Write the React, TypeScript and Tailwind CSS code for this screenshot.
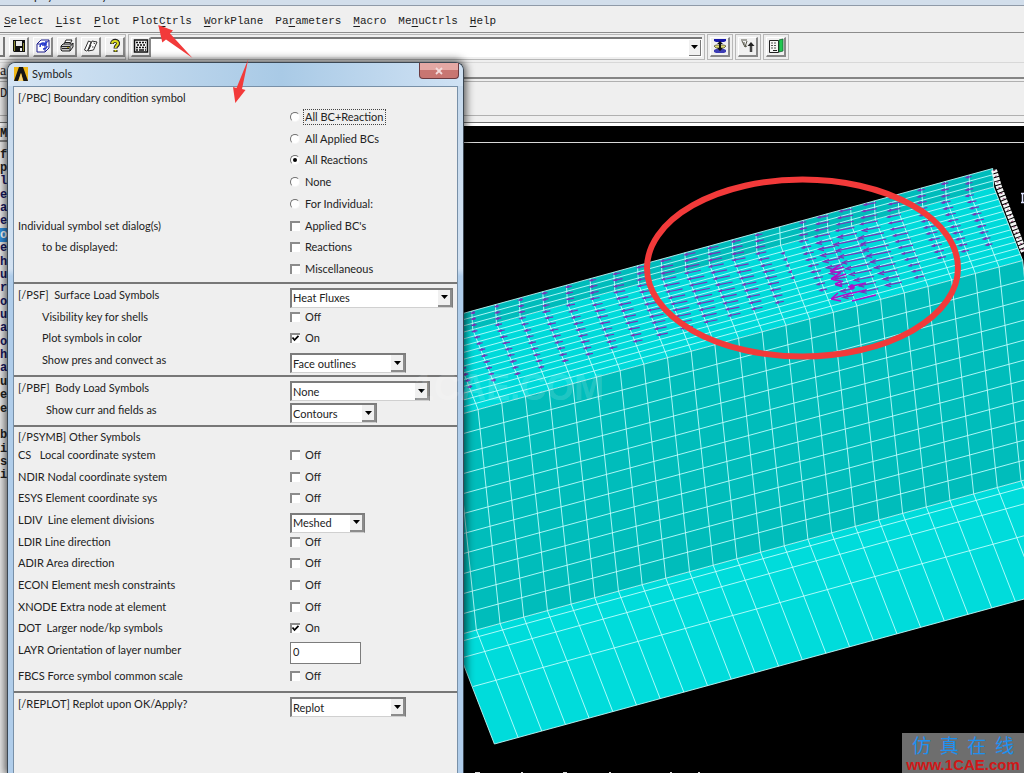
import React, { useId } from "react";

/* ---------- Mesh view ---------- */

type Pt = [number, number];

const COLS = 25;
const top = (k: number): Pt => [992.7 - 23.68 * k, 168.5 + 6.48 * k];
const at = (k: number, o: Pt): Pt => [top(k)[0] + o[0], top(k)[1] + o[1]];

const lerp = (a: Pt, b: Pt, n: number): Pt[] =>
  Array.from({ length: n + 1 }, (_, i) => [
    a[0] + ((b[0] - a[0]) * i) / n,
    a[1] + ((b[1] - a[1]) * i) / n,
  ]);

const TOP: Pt = [0, 0];
const BEND: Pt = [1, 18.5];
const EDGE: Pt = [30, 92];
const FOOT: Pt = [52, 306];
const BASE: Pt = [93.7, 413.5];

const upperRows = lerp(TOP, BEND, 3);
const slopeRows = lerp(BEND, EDGE, 12);
const frontRows = lerp(EDGE, FOOT, 11);
const baseRows: Pt[] = [[54.3, 312.5], [60.3, 327.5], [72.5, 356], BASE];
const rows = [...upperRows, ...slopeRows.slice(1), ...frontRows.slice(1), ...baseRows];
const arrowRows = [...upperRows, ...slopeRows.slice(1)];

const band = (a: Pt, b: Pt) =>
  [at(0, a), at(COLS, a), at(COLS, b), at(0, b)].map((p) => p.join(",")).join(" ");

const columnLine = (k: number) =>
  [TOP, BEND, EDGE, FOOT, BASE].map((o) => at(k, o).join(",")).join(" ");

/* Reaction vector length for each mesh column, right to left */
const REACH = [0, 8, 9, 10, 14, 18, 19, 16, 9, 2, 10, 13, 15, 16, 15, 13, 11, 9, 8, 7, 6, 6, 5, 5, 4, 4];

function Vectors() {
  const out: React.ReactNode[] = [];
  for (let k = 1; k <= COLS; k++) {
    const last = k >= 4 && k <= 7 ? 13 : 11;
    for (let i = 0; i <= last; i++) {
      const [x, y] = at(k, arrowRows[i]);
      const swell = 0.55 + 0.5 * Math.sin((Math.PI * Math.min(i + 1, 13)) / 14);
      const peak = (k === 5 || k === 6) && i > 4 ? 1.35 : 1;
      const len = REACH[k] * swell * peak;
      if (len < 2) continue;
      const x0 = k > 9 ? x : x - len * (k >= 4 && k <= 7 ? 0.85 : 0.5);
      const x1 = x0 + len;
      const y0 = y - (x0 - x) * 0.2 + 2;
      const y1 = y - (x1 - x) * 0.2 + 2;
      const h = k >= 5 && k <= 7 && i > 3 ? 1.8 : 0.9;
      out.push(
        <g key={`${k}-${i}`}>
          <path d={`M${x0} ${y0}L${x1} ${y1}`} />
          <path d={`M${x0 + h * 3} ${y0 - h - 0.6}L${x0} ${y0}L${x0 + h * 3} ${y0 + h - 0.6}`} />
        </g>
      );
    }
  }
  return (
    <g stroke="#7a34b8" strokeWidth="1.2" fill="none">
      {out}
      <g stroke="#b010c8" strokeWidth="1.6">
        <path d="M831 299L851 293M831 299L838 293M831 299L841 301" />
        <path d="M831 279L846 274M831 279L840 273M831 279L841 281" />
        <path d="M830 271L844 267M830 271L840 265M830 271L841 273" />
        <path d="M835 284L843 281M835 284L842 286M848 287L866 283M848 294L866 290M852 301L876 295" />
        <circle cx="852" cy="287" r="2" fill="#b010c8" />
      </g>
    </g>
  );
}

function MeshView() {
  return (
    <svg
      className="block h-full min-w-0 flex-1 bg-black"
      viewBox="12 126 1012 647"
      preserveAspectRatio="xMinYMin slice"
      role="img"
      aria-label="Finite element mesh with reaction vectors"
    >
      <path d="M12 142.5H1024" stroke="#d8d8d8" />
      <polygon points={band(TOP, BEND)} fill="#00bcbb" />
      <polygon points={band(BEND, EDGE)} fill="#00dada" />
      <polygon points={band(EDGE, FOOT)} fill="#00bdbb" />
      <polygon points={band(FOOT, BASE)} fill="#00dcdb" />
      <g stroke="#c8ffff" strokeOpacity="0.85" fill="none">
        {rows.map((o, i) => (
          <path key={i} d={`M${at(0, o).join(" ")}L${at(COLS, o).join(" ")}`} />
        ))}
        {Array.from({ length: COLS + 1 }, (_, k) => (
          <polyline key={k} points={columnLine(k)} />
        ))}
      </g>
      <Vectors />
      <polyline points="994,170 999,187 1024,252" stroke="#f4f4f4" strokeWidth="6" strokeDasharray="3 1" fill="none" />
      <polyline points="994,170 999,187 1024,252" stroke="#8a3a6a" strokeWidth="2" strokeDasharray="1 5" fill="none" />
      <ellipse cx="802.5" cy="268" rx="155.5" ry="88.5" stroke="#f23a3a" strokeWidth="6" fill="none" />
      <path d="M1021 193.500H1024M1022.500 193V203M1021 202.500H1024" stroke="#dfe3ff" strokeWidth="1.500" />
      <path d="M475 772.500h5M521 772.500h2M563 772.500h4M609 772.500h2M670 772.500h2M698 772.500h2" stroke="#ddd" />
    </svg>
  );
}

/* ---------- Toolbar ---------- */

function SaveIcon() {
  return (
    <svg viewBox="0 0 16 16" className="size-4" aria-hidden="true">
      <path d="M2 2h12v12H3l-1-1z" fill="#111" />
      <path d="M5 3h6v5H5z" fill="#e8e8e8" />
      <path d="M3 3h1v10H3zM12 5h1v8h-1z" fill="#8a8a30" />
      <path d="M9 10h2v3H9z" fill="#eee" />
    </svg>
  );
}
function ViewIcon() {
  return (
    <svg viewBox="0 0 16 16" className="size-4" fill="none" aria-hidden="true">
      <path d="M2 6L6 2H14V10L10 14H2Z" fill="#fff" stroke="#1c1c8c" />
      <path d="M2.500 6H10V13.500M10 6L14 2.500" stroke="#1c1c8c" />
      <path d="M5 9C5 5 8 4 11 6M11 3V7H7M8 11C11 11 12 9 12 8" stroke="#2238d0" strokeWidth="1.500" />
    </svg>
  );
}
function PrintIcon() {
  return (
    <svg viewBox="0 0 16 16" className="size-4" fill="none" stroke="#222" aria-hidden="true">
      <path d="M5 6L7 2H13L11 6" fill="#fff" />
      <path d="M2 8L4 6H13L14 5V9L11 13H3L2 12Z" fill="#c8c8c8" />
      <path d="M2 8.500H11L14 5.500M11 8.500V13M3 10.500H10M6 4.500H11" />
      <path d="M8 9.500H10" stroke="#b0a020" />
    </svg>
  );
}
function ReportIcon() {
  return (
    <svg viewBox="0 0 16 16" className="size-4" fill="#fff" stroke="#333" aria-hidden="true">
      <path d="M5.500 3L8 4L5 12L3.500 13L1.500 12Z" />
      <path d="M9 3L14 4L10.500 12L5 13Z" />
      <path d="M10.500 5L12 5.500M9 9L10.500 9M8 7L6 11" fill="none" />
    </svg>
  );
}
function HelpIcon() {
  return (
    <svg viewBox="0 0 16 16" className="size-4" fill="none" aria-hidden="true">
      <path d="M5 6C5 1.500 12 2 11 6C10.500 8 8.500 7.500 8.500 10.500M8.500 12V14" stroke="#222" strokeWidth="4" />
      <path d="M5 5.500C5.500 2 11 2.500 11 5.500C10.500 8 8.500 7.500 8.500 10M8.500 12V13.500" stroke="#dede20" strokeWidth="2" />
    </svg>
  );
}
function KeyboardIcon() {
  return (
    <svg viewBox="0 0 16 16" className="size-4" fill="none" stroke="#111" aria-hidden="true">
      <rect x="1.500" y="2" width="13" height="12" fill="#f4f4f4" strokeWidth="1.500" />
      <path d="M3 4.500H13" strokeDasharray="2 1" strokeWidth="1.500" />
      <path d="M4 7H13" strokeDasharray="2 1" strokeWidth="1.500" />
      <path d="M3 9.500H13" strokeDasharray="2 1" strokeWidth="1.500" />
      <path d="M3 12H5M6 12H11M12 12H13" strokeWidth="1.500" />
    </svg>
  );
}
function RaiseIcon() {
  return (
    <svg viewBox="0 0 16 16" className="size-4" aria-hidden="true">
      <path d="M2 3V1h12v2l-2 1H4z" fill="#1616a8" />
      <path d="M2 8l2-1h8l2 1-2 2H4z" fill="#e0dc70" stroke="#222" strokeWidth="0.600" />
      <path d="M2 12l2-1h8l2 1v2l-2 1H4l-2-1z" fill="#3c3cb4" />
      <path d="M8 3l3 3H9v4h2l-3 3-3-3h2V6H5z" fill="#111" />
    </svg>
  );
}
function ResetPickIcon() {
  return (
    <svg viewBox="0 0 16 16" className="size-4" fill="none" aria-hidden="true">
      <path d="M1 2H7M2 3L5 9L7 3M4 4V7M5 9L7 8" stroke="#555548" />
      <path d="M11 7V14" stroke="#444" strokeWidth="2.500" />
      <path d="M7.500 8L11 4L14.500 8Z" fill="#222" />
    </svg>
  );
}
function ContactIcon() {
  return (
    <svg viewBox="0 0 16 16" className="size-4" aria-hidden="true">
      <path d="M1.500 2.500h9v12h-9z" fill="#f6f6f6" stroke="#222" />
      <path d="M3 5h6M3 7.500h6M3 10h6" stroke="#555" strokeDasharray="2 1" />
      <path d="M5 12.500h4" stroke="#222" />
      <path d="M11 2l4-1v12l-4 1z" fill="#20c850" stroke="#146030" strokeWidth="0.800" />
    </svg>
  );
}

const TOOLS: [string, () => React.JSX.Element][] = [
  ["Save", SaveIcon],
  ["Pan, zoom, rotate", ViewIcon],
  ["Print", PrintIcon],
  ["Report generator", ReportIcon],
  ["Help", HelpIcon],
];
const SIDE_TOOLS: [string, () => React.JSX.Element][] = [
  ["Raise hidden", RaiseIcon],
  ["Reset picking", ResetPickIcon],
  ["Contact manager", ContactIcon],
];

function ToolButton({ label, Icon }: { label: string; Icon: () => React.JSX.Element }) {
  return (
    <button
      type="button"
      aria-label={label}
      className="flex size-5 shrink-0 items-center justify-center border-r-2 border-b-2 border-t border-l border-t-white border-l-white border-r-[#888] border-b-[#888] bg-[#f0f0f0]"
    >
      <Icon />
    </button>
  );
}

const MENU: [string, string, string][] = [
  ["", "S", "elect"],
  ["", "L", "ist"],
  ["", "P", "lot"],
  ["Plot", "C", "trls"],
  ["", "W", "orkPlane"],
  ["Pa", "r", "ameters"],
  ["", "M", "acro"],
  ["Me", "n", "uCtrls"],
  ["", "H", "elp"],
];

function Chrome() {
  return (
    <header className="flex flex-col bg-[#efefef]">
      <div className="h-1.5 overflow-hidden border-b border-[#8f9aa8] bg-[#d2deeb] pl-1.5 text-xs leading-3">
        <div className="-mt-[10px]">Multiphysics Utility Menu</div>
      </div>
      <nav className="flex h-[27px] items-center gap-3 border-b border-[#8c8c8c] pt-1 pl-1 font-['Liberation_Mono',monospace] text-[11px] text-[#1c1c1c]">
        {MENU.map(([a, u, b]) => (
          <button type="button" key={a + u + b} className="whitespace-pre">
            {a}
            <span className="underline underline-offset-2">{u}</span>
            {b}
          </button>
        ))}
      </nav>
      <div className="flex h-[30px] items-center gap-0.5 border-b border-[#d8d8d8] pb-0.5">
        <div className="flex h-[26px] w-[126px] shrink-0 items-center gap-1 border-y border-r border-[#b8b8b8]">
          <span className="h-5 w-[5px] border-r-2 border-b-2 border-[#777]" />
          {TOOLS.map(([label, Icon]) => (
            <ToolButton key={label} label={label} Icon={Icon} />
          ))}
        </div>
        <div className="flex h-[26px] w-[577px] items-center border border-[#b8b8b8] pr-0.5 pl-0.5">
          <ToolButton label="Toggle command entry" Icon={KeyboardIcon} />
          <div className="flex h-5 min-w-0 flex-1 border-t-2 border-[#777] bg-white">
            <input aria-label="Command" className="min-w-0 flex-1 bg-transparent px-1 text-xs outline-none" />
            <button
              type="button"
              aria-label="Command history"
              className="m-px flex w-3 items-center justify-center border-r border-b border-[#777] bg-[#f0f0f0]"
            >
              <svg viewBox="0 0 7 4" className="w-[7px]" aria-hidden="true">
                <path d="M0 0H7L3.500 4Z" />
              </svg>
            </button>
          </div>
        </div>
        {SIDE_TOOLS.map(([label, Icon]) => (
          <div key={label} className="flex h-[26px] w-[26px] items-center justify-center border border-[#b8b8b8]">
            <ToolButton label={label} Icon={Icon} />
          </div>
        ))}
      </div>
      <div className="h-4 border-b-2 border-[#858585] font-['Liberation_Serif',serif] text-sm leading-4">a</div>
      <div className="mt-0.5 h-[35px] border-y border-[#b0b0b0] pt-1 font-['Liberation_Mono',monospace] text-xs">D</div>
      <div className="h-[10px] border-b-3 border-white bg-[#efefef] pt-1.5">
        <div className="h-px bg-[#707070]" />
      </div>
    </header>
  );
}

/* ---------- Tree strip behind the dialog ---------- */

const STRIP = [..."fpleaeoehurouaohauee", " ", ..."bisi"];

function TreeStrip() {
  return (
    <aside className="flex w-3 shrink-0 flex-col bg-[#ececec] font-['Liberation_Mono',monospace] text-xs font-bold">
      <div className="h-4 border-b-2 border-[#888] leading-4">M</div>
      <ul className="mt-1.5 flex h-[334px] w-2 flex-col leading-none">
        {STRIP.map((s, i) => (
          <li
            key={i}
            className={
              i === 6
                ? "flex flex-1 items-center bg-[#2f8fe0] text-white"
                : i > 1 && i < 17
                  ? "flex flex-1 items-center text-[#151560]"
                  : "flex flex-1 items-center text-[#222]"
            }
          >
            {s}
          </li>
        ))}
      </ul>
    </aside>
  );
}

/* ---------- Dialog ---------- */

function Radio({ label, checked, boxed }: { label: string; checked?: boolean; boxed?: boolean }) {
  return (
    <label className="flex items-center gap-1">
      <span className="relative size-[10px]">
        <input
          type="radio"
          name="pbc"
          defaultChecked={checked}
          className="peer block size-[10px] appearance-none rounded-full border border-[#f6f6f6] border-t-[#707070] border-l-[#707070] bg-white"
        />
        <span className="pointer-events-none absolute top-[3px] left-[3px] hidden size-1 rounded-full bg-black peer-checked:block" />
      </span>
      <span className={boxed ? "-ml-px border border-dotted border-[#444] px-px leading-[14px]" : "px-px"}>{label}</span>
    </label>
  );
}

function Check({ label, checked, name }: { label: string; checked?: boolean; name?: string }) {
  return (
    <label className="flex items-center gap-[5px]">
      <span className="relative size-[10px]">
        <input
          type="checkbox"
          aria-label={name ? `${name} ${label}` : undefined}
          defaultChecked={checked}
          className="peer block size-[10px] appearance-none border-t-2 border-l-2 border-[#8c8c8c] bg-white"
        />
        <svg viewBox="0 0 10 10" className="pointer-events-none absolute inset-0 hidden size-[10px] peer-checked:block" aria-hidden="true">
          <path d="M2.500 4.500L4.500 7L8.500 2.800" stroke="#000" strokeWidth="1.800" fill="none" />
        </svg>
      </span>
      <span>{label}</span>
    </label>
  );
}

function Combo({ id, value, width }: { id: string; value: string; width: string }) {
  return (
    <div className="flex items-center pt-1.5">
      <div className={`relative h-5 shrink-0 ${width}`}>
        <select
          id={id}
          className="block h-5 w-full appearance-none border-t-2 border-r border-b border-l-2 border-[#7c7c7c] border-b-[#d0d0d0] bg-white pl-px outline-none"
        >
          <option>{value}</option>
        </select>
        <span className="pointer-events-none absolute top-0.5 right-px bottom-px flex w-3.5 items-center justify-center border-r-2 border-b-2 border-[#8c8c8c] bg-[#f0f0f0]">
          <svg viewBox="0 0 7 4" className="w-[7px]" aria-hidden="true">
            <path d="M0 0H7L3.500 4Z" />
          </svg>
        </span>
      </div>
    </div>
  );
}

function Row({ text, indent, children }: { text: string; indent?: string; children: (id: string) => React.ReactNode }) {
  const id = useId();
  return (
    <>
      <label htmlFor={id} className={`flex items-center whitespace-pre ${indent ?? ""}`}>
        {text}
      </label>
      {children(id)}
    </>
  );
}

const GRID = "grid grid-cols-[272px_1fr]";

function Dialog() {
  return (
    <section
      role="dialog"
      aria-labelledby="dialog-title"
      className="absolute top-[62px] bottom-0 left-[7px] flex w-[457px] flex-col rounded-t-lg border-x border-t border-[#3c4854] bg-linear-to-b from-[#c4d8ec] from-0% via-[#d3e2f2] via-29% to-[#b0cdea] to-30% px-[5px] shadow-[0_0_8px_2px_rgba(0,0,0,0.65)]"
    >
      <div className="-mx-[5px] flex h-[23px] items-start justify-between rounded-t-lg bg-linear-to-r from-[#d6e5f4] via-[#a9cae6] via-60% to-[#d0e2f4] pr-1 pl-1.5">
        <div className="flex h-[22px] items-center gap-1">
          <svg viewBox="0 0 14 14" className="size-3.5" aria-hidden="true">
            <path d="M0 0H14V14H0Z" fill="#f0b818" />
            <path d="M5 0H9L14 14H9.500L7 6L4 14H0Z" fill="#151515" />
            <path d="M7 6L9 14H4.500Z" fill="#f6d27a" />
          </svg>
          <h1 id="dialog-title">Symbols</h1>
        </div>
        <button
          type="button"
          aria-label="Close"
          className="flex h-4 w-10 items-center justify-center rounded-b border border-t-0 border-[#6a3a40] bg-linear-to-b from-[#e4a8a4] from-45% to-[#c87672] to-50%"
        >
          <svg viewBox="0 0 8 8" className="size-2" aria-hidden="true">
            <path d="M1 1L7 7M7 1L1 7" stroke="#f4dcdc" strokeWidth="1.800" />
          </svg>
        </button>
      </div>
      <form className="min-h-0 flex-1 overflow-hidden border-x border-t border-[#7890a8] bg-[#efefef] [&>*]:pl-1">
        <fieldset className="border-b-2 border-[#777] pt-[3px] pb-0.5">
          <div className="h-4">[/PBC] Boundary condition symbol</div>
          <div className={`${GRID} h-[174px] grid-flow-col grid-rows-8`}>
            <div className="row-start-6 flex items-center">Individual symbol set dialog(s)</div>
            <div className="row-start-7 flex items-center pl-6">to be displayed:</div>
            <div className="col-start-2 row-span-8 row-start-1 grid grid-rows-8">
              <Radio label="All BC+Reaction" boxed />
              <Radio label="All Applied BCs" />
              <Radio label="All Reactions" checked />
              <Radio label="None" />
              <Radio label="For Individual:" />
              <Check label="Applied BC's" />
              <Check label="Reactions" />
              <Check label="Miscellaneous" />
            </div>
          </div>
        </fieldset>
        <div className="border-b-2 border-[#777] pb-1">
          <div className={`${GRID} h-[87px] grid-rows-4`}>
            <Row text="[/PSF]  Surface Load Symbols">{(id) => <Combo id={id} value="Heat Fluxes" width="w-[163px]" />}</Row>
            <Row text="Visibility key for shells" indent="pl-6">{() => <Check label="Off" name="Visibility key" />}</Row>
            <Row text="Plot symbols in color" indent="pl-6">{() => <Check label="On" checked name="Color" />}</Row>
            <Row text="Show pres and convect as" indent="pl-6">{(id) => <Combo id={id} value="Face outlines" width="w-[116px]" />}</Row>
          </div>
        </div>
        <div className="border-b-2 border-[#777] pb-1">
          <div className={`${GRID} h-[44px] grid-rows-2`}>
            <Row text="[/PBF]  Body Load Symbols">{(id) => <Combo id={id} value="None" width="w-[140px]" />}</Row>
            <Row text="Show curr and fields as" indent="pl-7">{(id) => <Combo id={id} value="Contours" width="w-[87px]" />}</Row>
          </div>
        </div>
        <div className="border-b-2 border-[#777] pt-[3px] pb-1">
          <div className="h-[14px] leading-[14px]">[/PSYMB] Other Symbols</div>
          <div className={`${GRID} h-[217px] grid-rows-10`}>
            <Row text="CS   Local coordinate system">{() => <Check label="Off" name="CS" />}</Row>
            <Row text="NDIR Nodal coordinate system">{() => <Check label="Off" name="NDIR" />}</Row>
            <Row text="ESYS Element coordinate sys">{() => <Check label="Off" name="ESYS" />}</Row>
            <Row text="LDIV  Line element divisions">{(id) => <Combo id={id} value="Meshed" width="w-[75px]" />}</Row>
            <Row text="LDIR Line direction">{() => <Check label="Off" name="LDIR" />}</Row>
            <Row text="ADIR Area direction">{() => <Check label="Off" name="ADIR" />}</Row>
            <Row text="ECON Element mesh constraints">{() => <Check label="Off" name="ECON" />}</Row>
            <Row text="XNODE Extra node at element">{() => <Check label="Off" name="XNODE" />}</Row>
            <Row text="DOT  Larger node/kp symbols">{() => <Check label="On" checked name="DOT" />}</Row>
            <Row text="LAYR Orientation of layer number">
              {(id) => (
                <div className="flex items-center pt-1.5">
                  <input
                    id={id}
                    defaultValue="0"
                    className="h-[22px] w-[71px] shrink-0 border border-[#7c7c7c] bg-white px-0.5 pb-1 outline-none"
                  />
                </div>
              )}
            </Row>
          </div>
          <div className={`${GRID} mt-1 h-[22px] grid-rows-1`}>
            <Row text="FBCS Force symbol common scale">{() => <Check label="Off" name="FBCS" />}</Row>
          </div>
        </div>
        <div className={`${GRID} h-[22px] grid-rows-1`}>
          <Row text="[/REPLOT] Replot upon OK/Apply?">{(id) => <Combo id={id} value="Replot" width="w-[116px]" />}</Row>
        </div>
      </form>
    </section>
  );
}

export default function App() {
  return (
    <div className="relative flex h-screen flex-col overflow-hidden bg-black font-['Lato','Noto_Sans',sans-serif] text-[11px] leading-4 text-[#222]">
      <Chrome />
      <main className="flex min-h-0 flex-1">
        <TreeStrip />
        <MeshView />
      </main>
      <Dialog />
      <svg className="pointer-events-none absolute top-0 left-0 h-28 w-64" viewBox="0 0 256 112" fill="#f23a3a" aria-hidden="true">
        <path d="M158.300 25L173 30.500L170 33.500L192.500 58L166 39.500L162.300 42.500Z" />
        <path d="M248.300 59L242 89L245.500 90L235.300 103L233 87L236.500 88Z" />
      </svg>
      <div className="pointer-events-none absolute top-[370px] left-[414px] font-['Liberation_Sans',sans-serif] text-[36px] leading-9 font-bold text-white/15">
        1CAE.COM
      </div>
      <div className="absolute right-0 bottom-0 flex h-10 w-[122px] flex-col bg-[#6e6e6e]">
        <div className="flex h-6 items-center justify-between px-2.5 font-['Noto_Sans_CJK_SC',sans-serif] text-[19px] leading-6 text-[#1e90f0]">
          <span>仿</span>
          <span>真</span>
          <span>在</span>
          <span>线</span>
        </div>
        <a href="http://www.1CAE.com" className="text-center font-['Liberation_Sans',sans-serif] text-[15px] leading-4 font-bold text-[#d01818]">
          www.1CAE.com
        </a>
      </div>
    </div>
  );
}
